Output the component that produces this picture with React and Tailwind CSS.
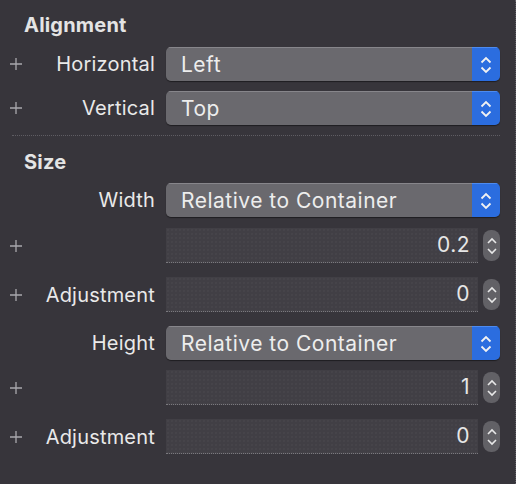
import React from "react";

const font = { fontFamily: "Inter, 'Noto Sans', sans-serif" };

function Plus() {
  return (
    <svg width="14" height="14" viewBox="0 0 14 14" className="block">
      <path d="M7 1v12M1 7h12" stroke="#a9a8ad" strokeWidth="1.3" />
    </svg>
  );
}

function Chevrons() {
  return (
    <svg width="14" height="22" viewBox="0 0 14 22" className="block">
      <path d="M2.5 8.5L7 4l4.5 4.5M2.5 13.5L7 18l4.5-4.5" fill="none" stroke="#f2f2f2" strokeWidth="1.8" />
    </svg>
  );
}

function Popup({ value }) {
  return (
    <div className="flex h-[34px] w-[334px] overflow-hidden rounded-[5px] shadow-[0_1px_1px_rgba(0,0,0,0.45)]">
      <div className="flex flex-1 items-center border-t border-[#87868b] bg-[#6a696e] pl-[15px] text-[21px] tracking-[0.5px] text-[#ededed]">
        {value}
      </div>
      <div className="flex w-[28px] items-center justify-center border-t border-[#4d8bf0] bg-[#2b6ddf]">
        <Chevrons />
      </div>
    </div>
  );
}

function Field({ value }) {
  return (
    <div className="flex w-[334px] items-center">
      <div className="flex h-[35px] w-[312px] items-center justify-end border-b border-dotted border-[#7a797e] bg-[#413f45] bg-[radial-gradient(#4b494f_0.6px,transparent_0.8px)] bg-[length:4px_4px] pr-[8px] text-[21px] tracking-[0.5px] text-[#e6e6e6]">
        {value}
      </div>
      <div className="ml-[5px] flex h-[31px] w-[17px] items-center justify-center rounded-[8px] bg-[#626166]">
        <svg width="12" height="24" viewBox="0 0 12 24" className="block">
          <path d="M2 9l4-4 4 4M2 15l4 4 4-4" fill="none" stroke="#e8e8e8" strokeWidth="1.6" />
        </svg>
      </div>
    </div>
  );
}

function Row({ plus, label, children, className = "" }) {
  return (
    <div className={"flex items-center " + className}>
      <div className="flex w-[30px] items-center justify-center pl-[1px]">{plus ? <Plus /> : null}</div>
      <div className="w-[125px] whitespace-nowrap text-right text-[20px] tracking-[0.2px] text-[#e9e9e9]">{label}</div>
      <div className="ml-[11px]">{children}</div>
    </div>
  );
}

export default function App() {
  return (
    <div
      style={font}
      className="relative h-[484px] w-[516px] overflow-hidden border-r border-dotted border-[#5d5b61] bg-[#37353b] antialiased"
    >
      <div className="pl-[24px] pt-[14px] text-[20px] font-bold leading-[22px] tracking-[0.2px] text-[#e4e4e4]">Alignment</div>
      <Row plus label="Horizontal" className="mt-[11px]">
        <Popup value="Left" />
      </Row>
      <Row plus label="Vertical" className="mt-[10px]">
        <Popup value="Top" />
      </Row>
      <div className="ml-[12px] mt-[10px] w-[488px] border-t border-dotted border-[#5f5d63]" />
      <div className="pl-[24px] pt-[15px] text-[20px] font-bold leading-[22px] tracking-[0.2px] text-[#e4e4e4]">Size</div>
      <Row label="Width" className="mt-[10px]">
        <Popup value="Relative to Container" />
      </Row>
      <Row plus className="mt-[11px]">
        <Field value="0.2" />
      </Row>
      <Row plus label="Adjustment" className="mt-[14px]">
        <Field value="0" />
      </Row>
      <Row label="Height" className="mt-[14px]">
        <Popup value="Relative to Container" />
      </Row>
      <Row plus className="mt-[10px]">
        <Field value="1" />
      </Row>
      <Row plus label="Adjustment" className="mt-[14px]">
        <Field value="0" />
      </Row>
    </div>
  );
}
